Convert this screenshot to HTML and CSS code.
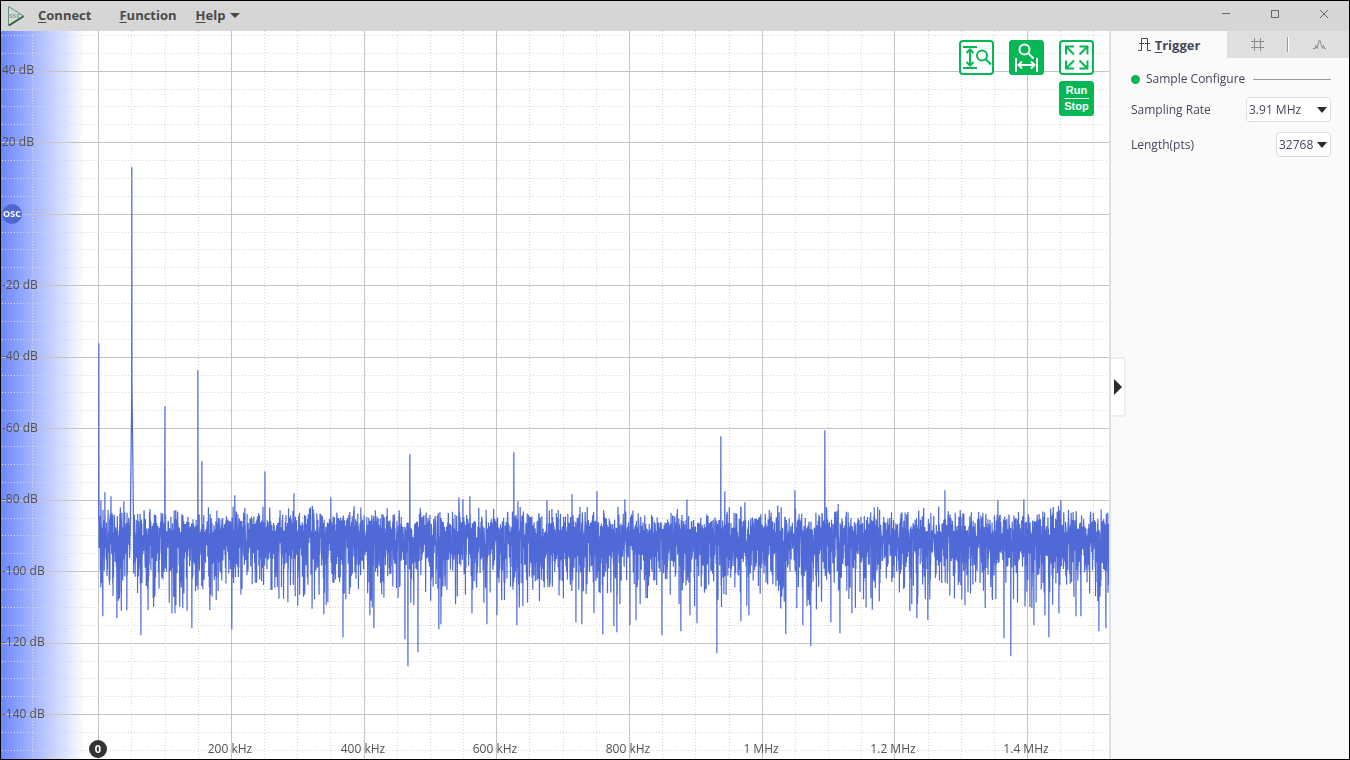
FILE: index.html
```html
<!DOCTYPE html>
<html lang="en">
<head>
  <meta charset="UTF-8" />
  <meta name="viewport" content="width=device-width, initial-scale=1" />
  <title>Spectrum Analyzer</title>
  <link rel="stylesheet" href="styles.css">
</head>
<body>

  <header class="titlebar">
    <svg class="logo" viewBox="0 0 18 22" aria-hidden="true">
      <path d="M1.5 1.5 L16.5 11 L1.5 20.5 Z" fill="none" stroke="#5a9a78" stroke-width="1" />
      <path d="M2 20.5 L16.5 11.3" stroke="#2f5a45" stroke-width="1.6" />
      <text x="2" y="13" class="logo-text">SST</text>
    </svg>
    <nav class="menu">
      <button type="button"><u>C</u>onnect</button>
      <button type="button"><u>F</u>unction</button>
      <button type="button" class="help"><u>H</u>elp <span class="caret"></span></button>
    </nav>
    <div class="window-buttons">
      <button type="button" aria-label="Minimize">
        <svg viewBox="0 0 10 10"><path d="M1 4.5h8" /></svg>
      </button>
      <button type="button" aria-label="Maximize">
        <svg viewBox="0 0 10 10"><path d="M1.5 1.5h7v7h-7z" /></svg>
      </button>
      <button type="button" aria-label="Close">
        <svg viewBox="0 0 10 10"><path d="M1 1l8 8M9 1l-8 8" /></svg>
      </button>
    </div>
  </header>

  <main class="workspace">
    <section class="plot" id="plot">
      <canvas id="spectrum"></canvas>
      <div id="labels"></div>
      <span class="osc-badge">OSC</span>
      <span class="zero-badge" id="zero">0</span>

      <div class="plot-tools">
        <button type="button" class="tool" aria-label="Zoom vertical">
          <svg viewBox="0 0 35 35">
            <path d="M4 7h14M4 28h14M11 10v15M7.500 13L11 9.500l3.500 3.500M7.500 22L11 25.500l3.500-3.500" />
            <circle cx="23" cy="15.500" r="5" /><path d="M26.500 19l5.500 5.500" />
          </svg>
        </button>
        <button type="button" class="tool active" aria-label="Zoom horizontal">
          <svg viewBox="0 0 35 35">
            <circle cx="15.500" cy="9.500" r="5" /><path d="M19 13l5.500 5.500" />
            <path d="M7 18v14M28 18v14M9.500 25h16M13 21.500L9.500 25l3.500 3.500M22 21.500l3.500 3.500-3.500 3.500" />
          </svg>
        </button>
        <button type="button" class="tool" aria-label="Fit to screen">
          <svg viewBox="0 0 35 35">
            <path d="M7 14.500V6.500H15M7 6.500l8 8M20.500 6.500h8v8M28.500 6.500l-8 8M7 20.500v8h8M7 28.500l8-8M28.500 20.500v8h-8M28.500 28.500l-8-8" />
          </svg>
        </button>
        <button type="button" class="tool active run-stop"><span>Run</span><span>Stop</span></button>
      </div>
    </section>

    <aside class="panel">
      <button type="button" class="collapse" aria-label="Collapse panel"></button>
      <div class="tabs">
        <button type="button" class="tab current">
          <svg viewBox="0 0 13 13"><path d="M0 12.500h3.500V.5h6v12H13M1 5.500h5M7 5.500h5" /></svg>
          <span><u>T</u>rigger</span>
        </button>
        <button type="button" class="tab" aria-label="Grid">
          <svg viewBox="0 0 13 13"><path d="M3.500 0v13M9.500 0v13M0 3.500h13M0 9.500h13" /></svg>
        </button>
        <span class="tab-separator"></span>
        <button type="button" class="tab" aria-label="Waveform">
          <svg viewBox="0 0 13 13"><path d="M0 10.500h2l1-3 1 3 2-8h1l2.500 8 1-3 1 3H13" /></svg>
        </button>
      </div>

      <form class="settings">
        <h2>Sample Configure</h2>
        <div class="field">
          <label for="rate">Sampling Rate</label>
          <span class="select rate"><select id="rate"><option>3.91 MHz</option></select></span>
        </div>
        <div class="field">
          <label for="length">Length(pts)</label>
          <span class="select length"><select id="length"><option>32768</option></select></span>
        </div>
      </form>
    </aside>
  </main>

  <script src="spectrum.js"></script>
</body>
</html>
```
FILE: styles.css
```css
* {
  margin: 0; padding: 0; box-sizing: border-box;
}
html, body {
  height: 100%;
}
body {
  display: flex;
  flex-direction: column;
  border: 1px solid #000;
  font-family: "Open Sans", "Noto Sans", sans-serif;
  font-size: 12px;
  color: #46465a;
  background: #fafafa;
  overflow: hidden;
}
button {
  border: none;
  background: none;
  font: inherit;
  color: inherit;
  cursor: pointer;
}
svg {
  display: block;
  fill: none;
  stroke: currentColor;
}

/* title bar */
.titlebar {
  display: flex;
  align-items: center;
  height: 30px;
  padding-left: 6px;
  background: #d6d6d6;
}
.logo {
  width: 18px;
  height: 22px;
}
.logo-text {
  font-family: "Liberation Serif", serif;
  font-size: 7px;
  font-style: italic;
  fill: #4d8a6a;
  stroke: none;
}
.menu {
  display: flex;
  gap: 28px;
  margin-left: 13px;
  padding-bottom: 2px;
  font-size: 13px;
  font-weight: bold;
  color: #4a4a4a;
}
.menu button {
  display: flex;
  align-items: center;
}
.menu .help {
  margin-left: -9px;
}
u {
  text-underline-offset: 2px;
}
.caret {
  margin-left: 5px;
  border: 5px solid transparent;
  border-top-color: #4a4a4a;
  border-bottom: none;
}
.window-buttons {
  display: flex;
  align-self: flex-start;
  margin-left: auto;
  margin-right: 1px;
  height: 25px;
  color: #666;
}
.window-buttons button {
  display: grid;
  place-items: center;
  width: 49px;
}
.window-buttons svg {
  width: 10px;
  height: 10px;
}

.workspace {
  flex: 1;
  display: flex;
  min-height: 0;
}

/* plot */
.plot {
  position: relative;
  flex: 1;
  min-width: 0;
  overflow: hidden;
  background: linear-gradient(to right, #6c88ff, #fff 84px);
}
#spectrum {
  display: block;
  width: 100%;
  height: 100%;
}
.axis-label {
  position: absolute;
  line-height: 16px;
  white-space: nowrap;
  color: #505050;
}
.axis-label.y {
  left: 1px;
  transform: translateY(-50%);
}
.axis-label.x {
  bottom: 2px;
  transform: translateX(-50%);
}
.osc-badge, .zero-badge {
  position: absolute;
  border-radius: 50%;
  text-align: center;
  color: #fff;
  transform: translate(-50%, -50%);
}
.osc-badge {
  left: 11px;
  top: 183px;
  width: 20px;
  height: 20px;
  line-height: 20px;
  font-size: 9px;
  font-weight: bold;
  background: #4f69d2;
}
.zero-badge {
  bottom: -8px;
  width: 18px;
  height: 18px;
  line-height: 18px;
  font-size: 11px;
  font-weight: bold;
  background: #333;
}
.plot-tools {
  position: absolute;
  top: 9px;
  right: 15px;
  display: grid;
  grid-template-columns: repeat(3, 35px);
  gap: 6px 15px;
}
.tool {
  width: 35px;
  height: 35px;
  border-radius: 4px;
  color: #06b853;
  background: #fff;
  box-shadow: inset 0 0 0 2px #06b853;
}
.tool svg {
  stroke-width: 2;
}
.tool.active {
  color: #fff;
  background: #06b853;
}
.run-stop {
  grid-column: 3;
  display: flex;
  flex-direction: column;
  align-items: center;
  justify-content: center;
  font: bold 11px/15px "Liberation Sans", sans-serif;
}
.run-stop span:first-child {
  width: 25px;
  border-bottom: 1px solid #fff;
}

/* side panel */
.panel {
  position: relative;
  width: 240px;
  border-left: 2px solid #e0e0e0;
  background: #fafafa;
}
.collapse {
  position: absolute;
  left: 0;
  top: 326px;
  width: 15px;
  height: 60px;
  border: 2px solid #eee;
  border-left: none;
  border-radius: 0 4px 4px 0;
  background: #fff;
}
.collapse::before {
  content: "";
  display: block;
  width: 0;
  margin-left: 3px;
  border: 8px solid transparent;
  border-left-color: #2b2b2b;
  border-right: none;
}
.tabs {
  display: flex;
  align-items: center;
  height: 27px;
  background: #dfdfdf;
  color: #8c8c8c;
}
.tab {
  flex: 1;
  display: flex;
  align-items: center;
  justify-content: center;
  gap: 4px;
  height: 100%;
}
.tab svg {
  width: 13px;
  height: 13px;
}
.tab.current {
  flex: 0 0 116px;
  font-size: 13px;
  line-height: 16px;
  font-weight: bold;
  color: #46465a;
  background: #fafafa;
}
.tab-separator {
  width: 2px;
  height: 15px;
  border-left: 1px solid #999;
  background: #fff;
}
.settings {
  display: flex;
  flex-direction: column;
  gap: 10px;
  padding: 13px 18px 0 20px;
}
.settings h2 {
  display: flex;
  align-items: center;
  font-size: 12px;
  line-height: 16px;
  font-weight: normal;
}
.settings h2::before {
  content: "";
  width: 9px;
  height: 9px;
  margin-right: 6px;
  border-radius: 50%;
  background: #06b853;
}
.settings h2::after {
  content: "";
  flex: 1;
  margin-left: 8px;
  border-top: 1px solid #999;
}
.field {
  display: flex;
  align-items: center;
  justify-content: space-between;
}
.select {
  position: relative;
}
.select select {
  width: 100%;
  height: 25px;
  padding-left: 2px;
  appearance: none;
  border: 1px solid #ddd;
  border-radius: 4px;
  font: inherit;
  color: inherit;
  background: #fff;
}
.select::after {
  content: "";
  position: absolute;
  right: 4px;
  top: 10px;
  border: 5px solid transparent;
  border-top: 6px solid #2b2b2b;
  border-bottom: none;
  pointer-events: none;
}
.rate {
  width: 85px;
}
.length {
  width: 55px;
}
```
FILE: spectrum.js
```js
const plot = document.getElementById("plot");
const canvas = document.getElementById("spectrum");
const labels = document.getElementById("labels");
const ctx = canvas.getContext("2d");

// scale of the plot: where 0 Hz / 0 dB sit and how far the divisions are apart
const zeroX = 97.7;
const zeroY = 183.2;
const pxPerKHz = 132.7 / 200;
const pxPerDb = 3.575;
const binKHz = 0.24;

// spurs and nulls: offset in px right of 0 Hz, px below 0 dB
const spurs = [
  [0, 129], [2, 286], [6, 278], [12, 282], [25, 287], [33, -47], [66, 192], [99, 156], [103, 247],
  [136, 281], [166, 257], [195, 279], [232, 283], [311, 240], [360, 283],
  [364, 285], [371, 282], [415, 238], [419, 287], [448, 286], [473, 280],
  [498, 277], [518, 264], [526, 285], [588, 285], [622, 222], [626, 277],
  [646, 288], [696, 276], [712, 287], [726, 216], [829, 281], [846, 276],
  [899, 286], [912, 286], [925, 285], [933, 247], [962, 286]
];
const nulls = [
  [4, 402], [18, 404], [28, 396], [42, 421], [73, 399], [76, 399], [93, 414],
  [111, 396], [133, 415], [189, 388], [225, 400], [229, 388], [244, 423],
  [271, 401], [275, 414], [306, 425], [309, 452], [319, 438], [340, 415],
  [342, 410], [373, 399], [388, 410], [398, 401], [418, 411], [477, 408],
  [483, 410], [495, 399], [504, 420], [515, 412], [518, 418], [531, 411],
  [537, 406], [563, 421], [582, 417], [591, 401], [598, 409], [618, 439],
  [642, 407], [650, 401], [687, 420], [704, 411], [712, 432], [732, 408],
  [741, 419], [753, 399], [811, 397], [818, 404], [829, 406], [905, 424],
  [912, 442], [933, 394], [935, 411], [946, 401], [950, 423], [960, 399],
  [977, 402], [982, 402], [1000, 417], [1007, 414]
];

let seed = 20231;
function random() {
  seed = (seed * 1664525 + 1013904223) % 4294967296;
  return (seed + 1) / 4294967297;
}

function buildTrace(width) {
  const step = binKHz * pxPerKHz;
  const points = [];
  for (let x = 0; x < width - zeroX + 1; x += step) {
    let db = -89.5 + 10 * Math.log10(-Math.log(random()));
    if (db < -111) db = -111 + random() * 12;
    db = Math.min(db, -81 - random());
    const d = Math.abs(x - 33.2);
    if (d < 1.6) db = Math.max(db, -45 - 26 * d);
    points.push([x, -db * pxPerDb]);
  }
  spurs.concat(nulls).forEach(([x, y]) => {
    const i = Math.round((x + 0.2) / step);
    if (points[i]) points[i][1] = y;
  });
  return points;
}

function line(x1, y1, x2, y2) {
  ctx.beginPath();
  ctx.moveTo(x1, y1);
  ctx.lineTo(x2, y2);
  ctx.stroke();
}

function addLabel(text, axis, pos) {
  const el = document.createElement("span");
  el.className = "axis-label " + axis;
  el.textContent = text;
  el.style[axis === "x" ? "left" : "top"] = pos + "px";
  labels.appendChild(el);
}

function drawGrid(w, h) {
  for (const major of [false, true]) {
    ctx.strokeStyle = major ? "#c4c4c4" : "#d6d6d6";
    ctx.setLineDash(major ? [] : [1, 2]);
    for (let k = -2; zeroX + k * 50 * pxPerKHz < w; k++) {
      if ((k % 4 === 0) !== major) continue;
      const x = Math.floor(zeroX + k * 50 * pxPerKHz);
      line(x + 0.5, 0, x + 0.5, h);
      if (major && k > 0) {
        const khz = k * 50;
        addLabel(khz < 1000 ? khz + " kHz" : khz / 1000 + " MHz", "x", x - 1);
      }
    }
    for (let k = -10; zeroY + k * 5 * pxPerDb < h; k++) {
      if ((k % 4 === 0) !== major) continue;
      const y = zeroY + k * 5 * pxPerDb;
      line(1, Math.floor(y) + 0.5, w, Math.floor(y) + 0.5);
      if (major && k !== 0 && y > 0) addLabel(-k * 5 + " dB", "y", Math.round(y) - 1);
    }
  }
  ctx.setLineDash([]);
}

function draw() {
  const w = canvas.width = plot.clientWidth;
  const h = canvas.height = plot.clientHeight;
  labels.innerHTML = "";
  seed = 20231;
  drawGrid(w, h);

  ctx.strokeStyle = "#4f69d6";
  ctx.lineWidth = 1.2;
  ctx.lineJoin = "bevel";
  ctx.beginPath();
  buildTrace(w).forEach(([x, y]) => ctx.lineTo(zeroX + x, zeroY + y));
  ctx.stroke();
  document.getElementById("zero").style.left = Math.floor(zeroX) + "px";
}

window.addEventListener("resize", draw);
draw();
```
